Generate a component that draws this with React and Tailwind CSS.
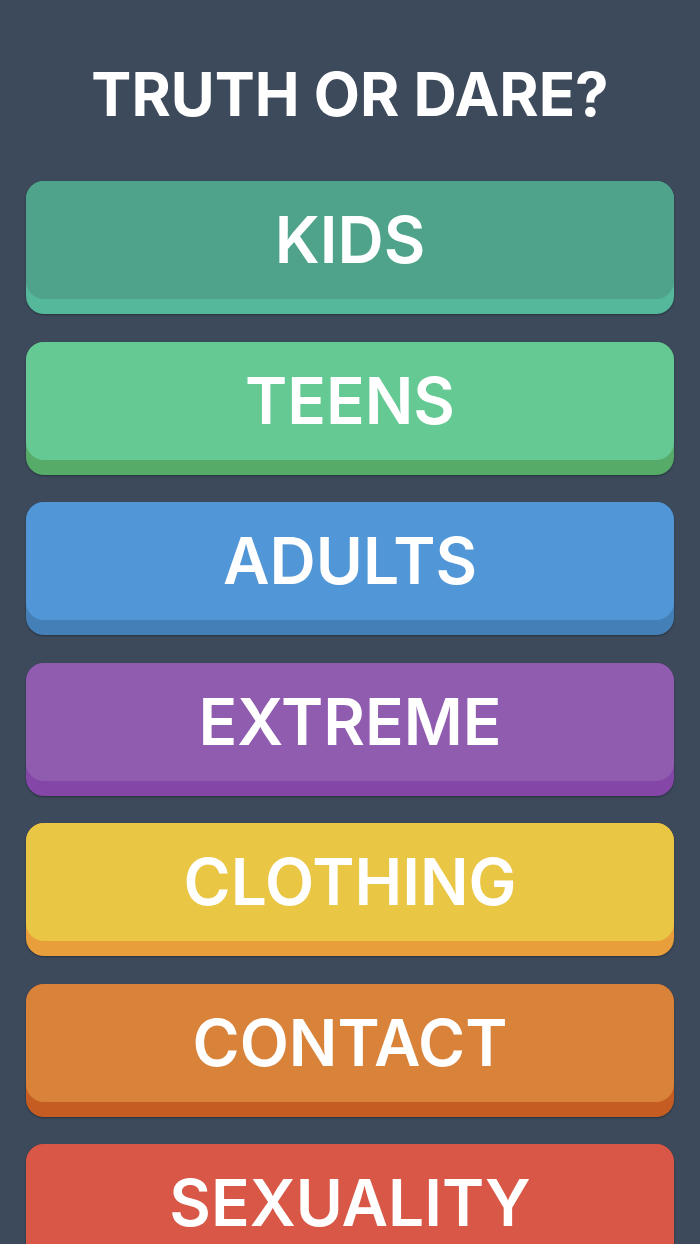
const categories = [
  { label: "KIDS", face: "bg-[#4ea38a]", edge: "bg-[#56b89b]" },
  { label: "TEENS", face: "bg-[#65c994]", edge: "bg-[#56ab68]" },
  { label: "ADULTS", face: "bg-[#5196d6]", edge: "bg-[#4480b7]" },
  { label: "EXTREME", face: "bg-[#905cb0]", edge: "bg-[#8447a8]" },
  { label: "CLOTHING", face: "bg-[#eac645]", edge: "bg-[#e89e3a]" },
  { label: "CONTACT", face: "bg-[#d8823a]", edge: "bg-[#c55d22]" },
  { label: "SEXUALITY", face: "bg-[#d85746]", edge: "bg-[#c2432f]" },
];

const CategoryButton = ({ label, face, edge }) => (
  <button
    className={`block w-full shrink-0 cursor-pointer rounded-[18px] pb-[15px] shadow-[0_1px_2px_rgba(0,0,0,0.35)] ${edge}`}
  >
    <div
      className={`flex h-[118px] items-center justify-center rounded-[18px] text-[64px] font-semibold leading-none text-white ${face}`}
    >
      {label}
    </div>
  </button>
);

const App = () => {
  return (
    <div
      className="h-screen overflow-hidden bg-[#3c4a5c] px-[26px] pt-[64px]"
      style={{ fontFamily: "Inter, 'Open Sans', sans-serif" }}
    >
      {/* title */}
      <h1 className="text-center text-[60px] font-bold leading-none text-white">
        TRUTH OR DARE?
      </h1>

      {/* categories */}
      <div className="mt-[57px] flex flex-col gap-[27.5px]">
        {categories.map((c) => (
          <CategoryButton key={c.label} {...c} />
        ))}
      </div>
    </div>
  );
};

export default App;
